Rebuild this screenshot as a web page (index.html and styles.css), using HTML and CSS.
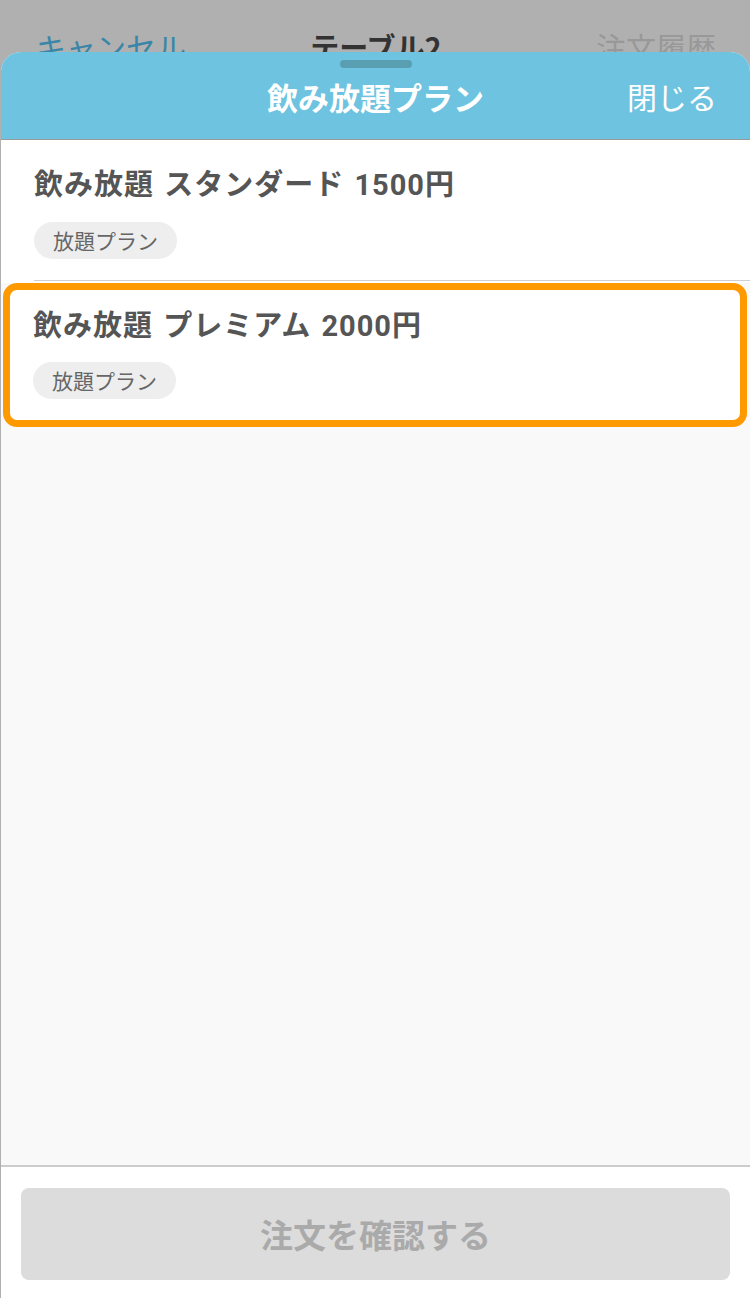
FILE: index.html
```html
<!DOCTYPE html>
<html lang="ja">
<head>
  <meta charset="UTF-8" />
  <meta name="viewport" content="width=device-width, initial-scale=1.0" />
  <title>飲み放題プラン</title>
  <link rel="stylesheet" href="styles.css">
</head>
<body>
  <!-- Page behind the sheet (dimmed) -->
  <div class="nav-bar">
    <span class="nav-left">キャンセル</span>
    <span class="nav-title">テーブル2</span>
    <span class="nav-right">注文履歴</span>
  </div>

  <!-- Bottom sheet -->
  <div class="sheet">
    <div class="sheet-header">
      <div class="handle"></div>
      <span class="sheet-title">飲み放題プラン</span>
      <span class="sheet-close">閉じる</span>
    </div>

    <div class="plan-list">
      <div class="plan">
        <div class="plan-inner">
          <div class="plan-name">飲み放題 スタンダード 1500円</div>
          <span class="tag">放題プラン</span>
        </div>
      </div>
      <div class="plan selected">
        <div class="plan-inner">
          <div class="plan-name">飲み放題 プレミアム 2000円</div>
          <span class="tag">放題プラン</span>
        </div>
      </div>
    </div>

    <div class="filler"></div>

    <div class="sheet-footer">
      <button class="confirm-button" disabled>注文を確認する</button>
    </div>
  </div>
</body>
</html>
```

FILE: styles.css
```css
html, body {
  margin: 0;
  padding: 0;
}
body {
  background: #b0b0b0; /* dimmed page */
  font-family: "Noto Sans CJK JP", "Noto Sans", sans-serif;
  width: 750px;
  height: 1298px;
  overflow: hidden;
}
/* Nav bar of the page under the sheet */
.nav-bar {
  height: 52px;
  padding: 0 34px 0 36px;
  display: flex;
  justify-content: space-between;
  align-items: flex-start;
  font-size: 30px;
  line-height: 40px;
  box-sizing: border-box;
}
.nav-bar span {
  padding-top: 26px;
}
.nav-left {
  color: #3a86a8;
  width: 160px;
}
.nav-title {
  color: #333;
  font-weight: bold;
  font-size: 29px;
}
.nav-right {
  color: #989898;
  width: 160px;
  text-align: right;
}
/* Sheet */
.sheet {
  position: relative;
  z-index: 1;
  margin-left: 1px;
  height: 1246px;
  background: #f9f9f9;
  border-radius: 20px 20px 0 0;
  display: flex;
  flex-direction: column;
  overflow: hidden;
}
.sheet-header {
  position: relative;
  height: 88px;
  background: #6ec3e0;
  border-bottom: 1px solid #9a9a9a;
  display: flex;
  align-items: center;
  justify-content: center;
  box-sizing: border-box;
  flex-shrink: 0;
}
.handle {
  position: absolute;
  top: 8px;
  left: 339px;
  width: 72px;
  height: 8px;
  border-radius: 4px;
  background: #5a9eb2;
}
.sheet-title {
  color: #fff;
  font-size: 31px;
  font-weight: bold;
  line-height: 40px;
  margin-top: 2px;
}
.sheet-close {
  position: absolute;
  right: 33px;
  top: 24px;
  color: #fff;
  font-size: 30px;
  line-height: 40px;
}
/* Plan rows */
.plan-list {
  background: #fff;
  flex-shrink: 0;
}
.plan {
  padding-left: 33px;
  background: #fff;
}
.plan-inner {
  padding: 25px 0 21px 0;
  border-bottom: 1px solid #cfcfcf;
}
.plan-name {
  font-family: Roboto, "Noto Sans CJK JP", sans-serif;
  font-size: 29px;
  font-weight: bold;
  letter-spacing: 1px;
  word-spacing: 2px;
  color: #555;
  line-height: 40px;
}
.tag {
  display: inline-block;
  margin-top: 17px;
  height: 37px;
  line-height: 37px;
  padding: 0 19px;
  border-radius: 19px;
  background: #eeeeee;
  color: #666;
  font-size: 21px;
}
.plan.selected {
  padding-left: 0;
  background: #f9f9f9;
}
.plan.selected .plan-inner {
  margin: 2px 3px 0 2px;
  padding: 16px 0 21px 23px;
  border: 7px solid #ff9900;
  border-radius: 14px;
  background: #fff;
}
.plan.selected .tag {
  margin-top: 16px;
}
.filler {
  flex: 1;
  background: #f9f9f9;
}
/* Footer */
.sheet-footer {
  flex-shrink: 0;
  background: #fff;
  border-top: 2px solid #cccccc;
  padding: 21px 20px 18px 20px;
}
.confirm-button {
  display: block;
  width: 100%;
  height: 92px;
  border: none;
  border-radius: 8px;
  background: #dcdcdc;
  color: #aaa;
  font-family: inherit;
  font-size: 33px;
  font-weight: bold;
}
```
